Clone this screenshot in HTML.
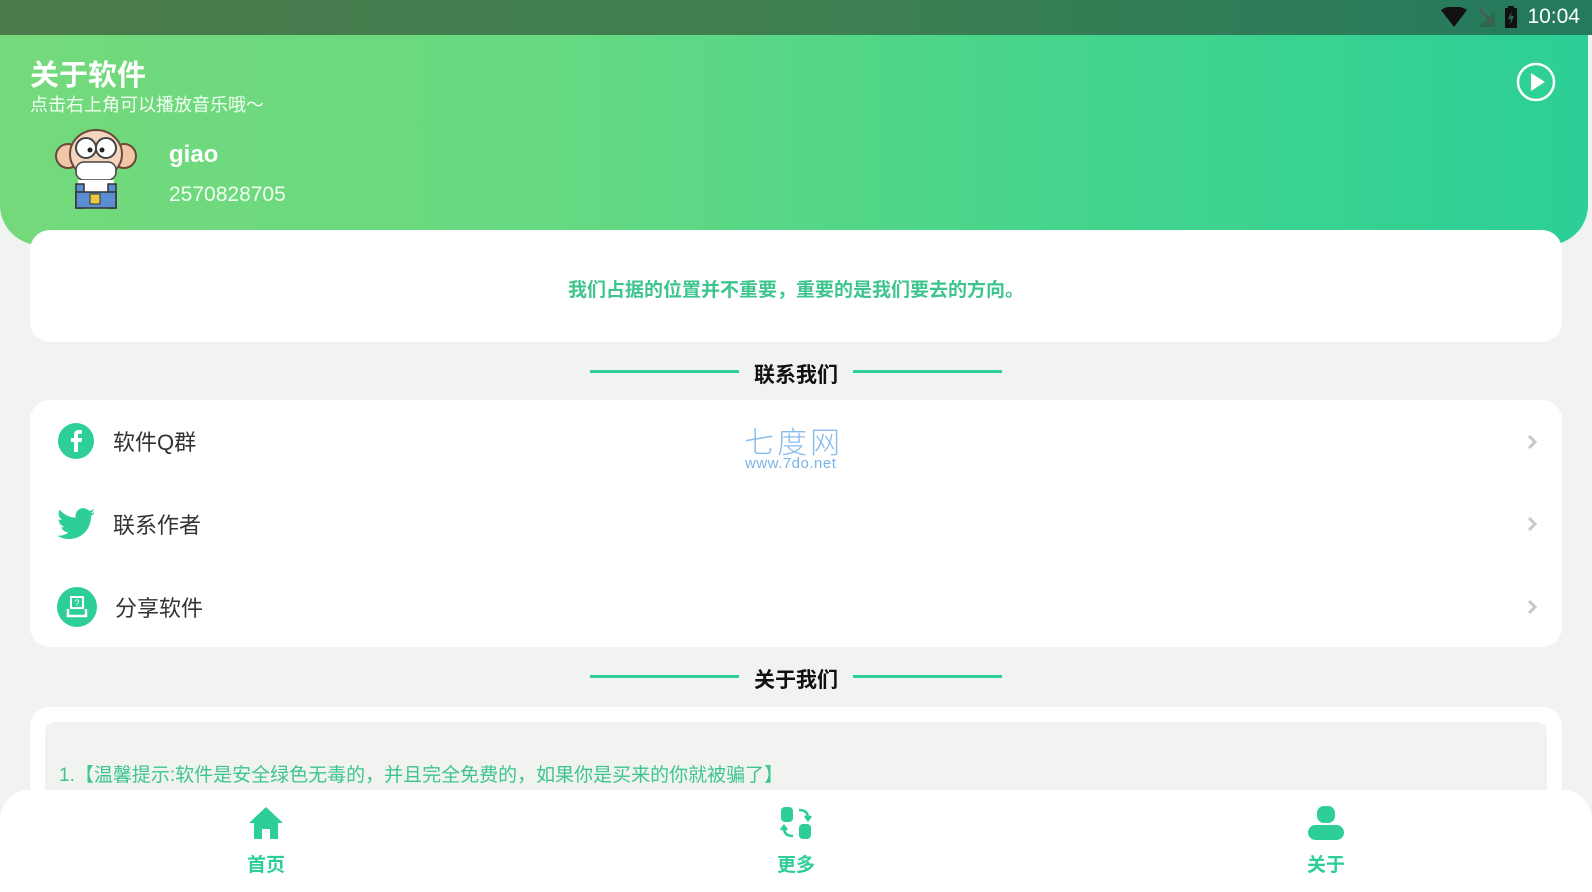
<!DOCTYPE html>
<html><head><meta charset="utf-8"><style>
*{margin:0;padding:0;box-sizing:border-box}
body{width:1592px;height:892px;overflow:hidden;background:#f1f3f1;font-family:"Liberation Sans","Noto Sans CJK SC",sans-serif;position:relative}
.sb{position:absolute;left:0;top:0;width:1592px;height:35px;background:linear-gradient(90deg,#4b7a4b,#3f8050 50%,#237a5e)}
.hd{position:absolute;left:0;top:35px;width:1588px;height:210px;background:linear-gradient(90deg,#74d97b,#66d982 35%,#42d48d 70%,#2ccf96);border-radius:0 0 40px 40px}
.card{position:absolute;left:30px;width:1532px;background:#fff;border-radius:20px}
.sec{position:absolute;left:0;width:1592px;text-align:center;font-size:21px;font-weight:bold;color:#111}
.line{position:absolute;height:3px;background:#2ecf96}
.row{position:absolute;left:57px;height:40px;display:flex;align-items:center}
.row span{margin-left:18px;font-size:22px;color:#333}
.chev{position:absolute;left:1526px;width:12px;height:16px}
.nav{position:absolute;left:0;top:790px;width:1592px;height:102px;background:#fff;border-radius:30px 30px 0 0}
.ni{position:absolute;top:0;width:80px;text-align:center;color:#2ecf96;font-size:19px;font-weight:bold}
</style></head><body>
<div class="sb"></div>
<div style="position:absolute;right:12px;top:5px;color:#fff;font-size:21px;display:flex;align-items:center;gap:10px">
<svg width="26" height="20" viewBox="0 0 26 20"><path d="M0 3Q13-5 26 3L13 20Z" fill="#111"/></svg>
<svg width="18" height="20"><path d="M2 20L18 4V20Z" fill="#2a6a4a"/><path d="M2 2L18 18" stroke="#555" stroke-width="2"/></svg>
<svg width="12" height="22"><rect x="0" y="2" width="12" height="20" fill="#111"/><rect x="3" y="0" width="6" height="3" fill="#111"/><path d="M7 5L3 13H6L5 19L9 10H6Z" fill="#2a6a4a"/></svg>
<span style="color:#fff">10:04</span></div>
<div class="hd"></div>
<div style="position:absolute;left:30px;top:52px;color:#fff;font-size:29px;font-weight:bold">关于软件</div>
<div style="position:absolute;left:30px;top:91px;color:#f3fff3;font-size:18px">点击右上角可以播放音乐哦～</div>
<svg style="position:absolute;left:54px;top:128px" width="84" height="82" viewBox="0 0 84 82">
<ellipse cx="14" cy="28" rx="12" ry="12" fill="#f2c7a8" stroke="#6a4a3a" stroke-width="2"/>
<ellipse cx="70" cy="28" rx="12" ry="12" fill="#f2c7a8" stroke="#6a4a3a" stroke-width="2"/>
<ellipse cx="42" cy="26" rx="26" ry="24" fill="#f5d5bd" stroke="#6a4a3a" stroke-width="2"/>
<circle cx="32" cy="20" r="10" fill="#fff" stroke="#444" stroke-width="2"/><circle cx="52" cy="20" r="10" fill="#fff" stroke="#444" stroke-width="2"/>
<circle cx="36" cy="22" r="2.5" fill="#222"/><circle cx="48" cy="22" r="2.5" fill="#222"/>
<rect x="22" y="34" width="40" height="18" rx="8" fill="#fff" stroke="#444" stroke-width="1.5"/>
<path d="M24 52H60V78H24Z" fill="#fff"/>
<rect x="22" y="56" width="8" height="24" fill="#5a8ed0" stroke="#333" stroke-width="1.5"/><rect x="54" y="56" width="8" height="24" fill="#5a8ed0" stroke="#333" stroke-width="1.5"/>
<rect x="22" y="64" width="40" height="16" fill="#5a8ed0" stroke="#333" stroke-width="1.5"/>
<rect x="36" y="66" width="10" height="10" fill="#e8c840" stroke="#333"/>
</svg>
<div style="position:absolute;left:169px;top:141px;color:#fff;font-size:24px;font-weight:bold">giao</div>
<div style="position:absolute;left:169px;top:183px;color:#f0fff0;font-size:21px">2570828705</div>
<svg style="position:absolute;left:1516px;top:62px" width="40" height="40" viewBox="0 0 40 40"><circle cx="20" cy="20" r="18" fill="none" stroke="#fff" stroke-width="2.5"/><path d="M15 11L29 20L15 29Z" fill="#fff"/></svg>

<div class="card" style="top:230px;height:112px"></div>
<div style="position:absolute;left:0;width:1592px;top:275px;text-align:center;font-size:19px;font-weight:bold;color:#3ec58d">我们占据的位置并不重要，重要的是我们要去的方向。</div>

<div class="line" style="left:590px;width:149px;top:370px"></div>
<div class="line" style="left:853px;width:149px;top:370px"></div>
<div class="sec" style="top:359px">联系我们</div>

<div class="card" style="top:400px;height:247px"></div>
<div style="position:absolute;left:744px;top:418px;color:#88bdec;font-size:30px;letter-spacing:3px;font-weight:300">七度网</div>
<div style="position:absolute;left:745px;top:455px;color:#7ab4e8;font-size:15px;letter-spacing:.5px">www.7do.net</div>
<div class="row" style="top:421px"><svg width="38" height="38" viewBox="0 0 38 38"><circle cx="19" cy="19" r="18" fill="#2ecf96"/><path d="M21 30V20H24.5L25 16H21V13.5C21 12.3 21.4 11.6 23 11.6H25V8.2C24.5 8.1 23.2 8 21.8 8 18.8 8 17 9.8 17 13V16H14V20H17V30Z" fill="#fff"/></svg><span>软件Q群</span></div>
<div class="row" style="top:504px"><svg width="38" height="34" viewBox="0 0 24 20"><path d="M24 2.4c-.9.4-1.8.7-2.8.8 1-.6 1.8-1.6 2.2-2.7-1 .6-2 1-3.1 1.2C19.3.7 18 0 16.6 0c-2.7 0-4.9 2.2-4.900 4.9 0 .4 0 .8.1 1.1C7.7 5.8 4.1 3.9 1.7.9c-.4.7-.7 1.6-.7 2.5 0 1.7.9 3.2 2.2 4.1-.8 0-1.6-.2-2.2-.6v.1c0 2.4 1.7 4.4 3.9 4.8-.4.1-.8.2-1.3.2-.3 0-.6 0-.9-.1.6 2 2.4 3.4 4.6 3.4-1.7 1.3-3.8 2.1-6.1 2.1-.4 0-.8 0-1.200-.1 2.2 1.4 4.8 2.2 7.5 2.2 9.1 0 14-7.5 14-14v-.6c1-.7 1.8-1.600 2.5-2.5z" fill="#2ecf96"/></svg><span>联系作者</span></div>
<div class="row" style="top:587px"><svg width="40" height="40" viewBox="0 0 40 40"><circle cx="20" cy="20" r="20" fill="#2ecf96"/><rect x="14" y="10" width="12" height="11" fill="none" stroke="#fff" stroke-width="2"/><path d="M11 22V29H29V22" fill="none" stroke="#fff" stroke-width="2.5"/><text x="20" y="19" font-size="9" fill="#fff" text-anchor="middle" font-family="Liberation Sans">?</text></svg><span>分享软件</span></div>
<svg class="chev" style="top:434px" viewBox="0 0 12 16"><path d="M3 2L9 8L3 14" fill="none" stroke="#c8c8c8" stroke-width="3"/></svg>
<svg class="chev" style="top:516px" viewBox="0 0 12 16"><path d="M3 2L9 8L3 14" fill="none" stroke="#c8c8c8" stroke-width="3"/></svg>
<svg class="chev" style="top:599px" viewBox="0 0 12 16"><path d="M3 2L9 8L3 14" fill="none" stroke="#c8c8c8" stroke-width="3"/></svg>

<div class="line" style="left:590px;width:149px;top:675px"></div>
<div class="line" style="left:853px;width:149px;top:675px"></div>
<div class="sec" style="top:664px">关于我们</div>

<div class="card" style="top:707px;height:120px"></div>
<div style="position:absolute;left:45px;top:722px;width:1502px;height:100px;background:#f1f3f1;border-radius:10px"></div>
<div style="position:absolute;left:59px;top:760px;color:#3ec58d;font-size:19px">1.【温馨提示:软件是安全绿色无毒的，并且完全免费的，如果你是买来的你就被骗了】</div>

<div class="nav">
<div class="ni" style="left:226px"><svg width="36" height="34" viewBox="0 0 36 34" style="margin-top:16px"><path d="M18 1L1 17H6V33H14V23H22V33H30V17H35Z" fill="#2ecf96"/></svg><div style="margin-top:4px">首页</div></div>
<div class="ni" style="left:756px"><svg width="36" height="36" viewBox="0 0 36 36" style="margin-top:15px"><rect x="3" y="2" width="12" height="15" rx="4" fill="#2ecf96"/><rect x="21" y="19" width="12" height="15" rx="4" fill="#2ecf96"/><path d="M21 5Q30 5 30 13M27 11L30 15 33 11M15 31Q6 31 6 23M3 25L6 21 9 25" fill="none" stroke="#2ecf96" stroke-width="2.5"/></svg><div style="margin-top:3px">更多</div></div>
<div class="ni" style="left:1286px"><svg width="38" height="36" viewBox="0 0 38 36" style="margin-top:15px"><rect x="10" y="1" width="18" height="17" rx="7" fill="#2ecf96"/><rect x="1" y="20" width="36" height="15" rx="7.5" fill="#2ecf96"/></svg><div style="margin-top:3px">关于</div></div>
</div>
</body></html>
